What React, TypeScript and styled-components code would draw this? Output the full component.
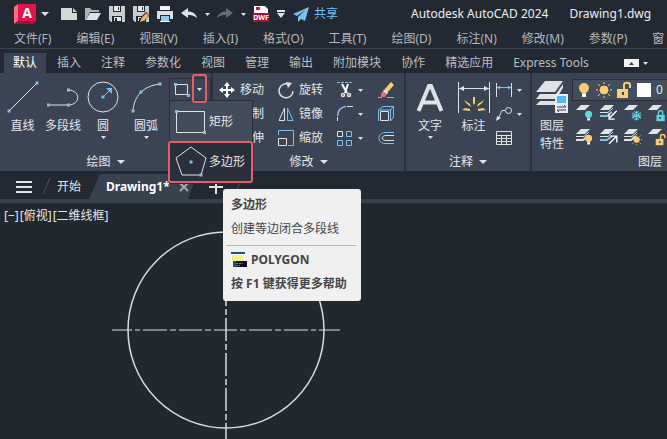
import React from "react";
import styled, { createGlobalStyle, css } from "styled-components";

const GlobalStyle = createGlobalStyle`
  * { box-sizing: border-box; }
  body {
    margin: 0;
    background: #212830;
    color: #e4e7ea;
    font: 12px/16px "Noto Sans", "Noto Sans CJK SC", sans-serif;
  }
  button, select { font: inherit; color: inherit; }
`;

const ink = "#dfe3e6";
const blue = "#7cc0f0";
const gold = "#f9cd74";

const buttonReset = css`
  margin: 0;
  padding: 0;
  border: 0;
  background: none;
  display: flex;
  align-items: center;
  flex: none;
  white-space: nowrap;
`;

const Window = styled.div`
  display: flex;
  flex-direction: column;
  min-height: 100vh;
  overflow: hidden;
`;

const TitleBar = styled.header`
  display: flex;
  align-items: center;
  height: 28px;
  padding-left: 14px;
  background: #222933;
`;

const QuickTools = styled.div`
  display: flex;
  align-items: center;
  gap: 8px;
  flex: none;
  width: 397px;
`;

const QuickButton = styled.button<{ $w?: number }>`
  ${buttonReset}
  justify-content: center;
  width: ${(p) => p.$w ?? 16}px;
  height: 20px;
`;

const LogoButton = styled.button`
  ${buttonReset}
  gap: 4px;
  width: 39px;
`;

const ShareButton = styled.button`
  ${buttonReset}
  gap: 5px;
  color: #76bdf0;
`;

const WindowTitle = styled.h1`
  display: flex;
  gap: 21px;
  margin: 0;
  flex: none;
  font-size: 12px;
  font-weight: 400;
  color: #eceef0;
`;

const MenuBar = styled.nav`
  display: flex;
  height: 21px;
  padding: 1px 0 0 14px;
  gap: 25px;
  border-bottom: 1px solid #3d4551;
  background: #222933;
`;

const MenuButton = styled.button`
  ${buttonReset}
  color: #b3b8be;
`;

const TabBar = styled.nav`
  display: flex;
  align-items: flex-end;
  height: 24px;
  padding-left: 4px;
  background: #222933;
`;

const RibbonTab = styled.button<{ $active?: boolean }>`
  ${buttonReset}
  height: 20px;
  padding: 0 10px;
  color: ${(p) => (p.$active ? "#ffffff" : "#b9bec4")};
  background: ${(p) => (p.$active ? "#3b4453" : "transparent")};
  &:first-child { padding: 0 9px; margin-right: 1px; }
`;

const TabTools = styled.div`
  display: flex;
  align-items: center;
  gap: 4px;
  height: 20px;
  margin-left: 25px;
`;

const CollapseButton = styled.button`
  ${buttonReset}
  justify-content: center;
  width: 15px;
  height: 8px;
  background: #f1f2f3;
`;

const Ribbon = styled.div`
  display: flex;
  height: 98px;
  margin-bottom: 3px;
  background: #3b4453;
`;

const Panel = styled.section<{ $w: number }>`
  display: flex;
  flex-direction: column;
  flex: none;
  width: ${(p) => p.$w}px;
  border-right: 2px solid #2c333e;
  &:last-child { border: 0; }
`;

const PanelBody = styled.div<{ $pad?: number }>`
  display: flex;
  flex: 1;
  min-height: 0;
  padding: 5px 0 0 ${(p) => p.$pad ?? 0}px;
`;

const PanelFooter = styled.button`
  ${buttonReset}
  justify-content: center;
  gap: 6px;
  width: 100%;
  height: 18px;
`;

const BigButton = styled.button<{ $w: number }>`
  ${buttonReset}
  flex-direction: column;
  width: ${(p) => p.$w}px;
  padding-top: 3px;
  justify-content: flex-start;
`;

const BigLabel = styled.span`
  display: block;
  margin: 4px 0 1px;
  line-height: 18px;
  text-align: center;
`;

const ToolColumn = styled.div<{ $w: number }>`
  display: flex;
  flex-direction: column;
  flex: none;
  width: ${(p) => p.$w}px;
`;

const ToolButton = styled.button`
  ${buttonReset}
  gap: 5px;
  height: 24px;
`;

const SplitTool = styled.div`
  position: relative;
  display: flex;
  align-self: flex-start;
  height: 23px;
  border: 1px solid #29303a;
  width: 42px;
`;

const SplitMain = styled.button`
  ${buttonReset}
  justify-content: center;
  width: 23px;
`;

const SplitArrow = styled.button`
  ${buttonReset}
  position: relative;
  justify-content: center;
  width: 13px;
  &::after {
    content: "";
    position: absolute;
    inset: -5px -1px -3px -1px;
    border: 2px solid #e85c68;
    border-radius: 3px;
    z-index: 4;
  }
`;

const ShapeMenu = styled.div`
  position: absolute;
  top: 21px;
  left: -1px;
  width: 84px;
  z-index: 3;
  background: #434c5b;
  border: 1px solid #29303a;
`;

const ShapeItem = styled.button<{ $active?: boolean }>`
  ${buttonReset}
  gap: 2px;
  width: 100%;
  height: 40px;
  padding: 2px 0 0 5px;
  ${(p) =>
    p.$active &&
    css`
      height: 42px;
      margin: 0 -2px;
      width: 85px;
      padding-top: 0;
      background: #29303b;
      border: 2px solid #e85c68;
      border-radius: 3px;
    `}
`;

const Tooltip = styled.div`
  position: absolute;
  top: 88px;
  left: 53px;
  width: 138px;
  height: 112px;
  padding: 8px 3px;
  border-radius: 3px;
  background: #f0f0f0;
  color: #454545;
`;

const TipText = styled.p<{ $light?: boolean }>`
  display: flex;
  align-items: center;
  gap: 4px;
  margin: 0;
  padding-left: 5px;
  height: 24px;
  white-space: nowrap;
  font-weight: ${(p) => (p.$light ? 400 : 700)};
  &:first-child { height: 16px; margin-bottom: 4px; }
`;

const TipRule = styled.hr`
  margin: 4px 0 2px;
  border: 0;
  border-top: 1px solid #b4b4b4;
  width: 130px;
`;

const LayerArea = styled.div`
  display: flex;
  flex-direction: column;
  padding-top: 1px;
`;

const LayerCombo = styled.div`
  display: flex;
  align-items: center;
  gap: 4px;
  height: 22px;
  width: 160px;
  padding-left: 3px;
  border: 1px solid #29303a;
  background: #434d5c;
`;

const LayerSelect = styled.select`
  appearance: none;
  border: 0;
  padding: 0;
  background: transparent;
`;

const LayerGrid = styled.div`
  display: grid;
  grid-template-columns: repeat(4, 24px);
  padding-left: 4px;
`;

const DocBar = styled.nav`
  display: flex;
  height: 29px;
  border-bottom: 4px solid #38414e;
  background: #222933;
`;

const DocButton = styled.button<{ $w: number }>`
  ${buttonReset}
  justify-content: center;
  width: ${(p) => p.$w}px;
`;

const ActiveDoc = styled.div`
  display: flex;
  align-items: center;
  gap: 8px;
  width: 108px;
  padding-left: 17px;
  background: #38414e;
  clip-path: polygon(11px 0, 100% 0, calc(100% - 9px) 100%, 0 100%);
`;

const DocName = styled.button`
  ${buttonReset}
  font-weight: 700;
  color: #ffffff;
`;

const Canvas = styled.main`
  position: relative;
  flex: 1;
  min-height: 236px;
  overflow: hidden;
  background: #212830;
`;

const ViewControls = styled.div`
  display: flex;
  gap: 1px;
  padding: 5px 0 0 4px;
`;

const ViewButton = styled.button`
  ${buttonReset}
`;

const Drawing = styled.svg`
  position: absolute;
  left: 110px;
  top: 0;
`;

const Icon = styled.svg`
  display: block;
  flex: none;
  overflow: visible;
  fill: none;
`;

type IconProps = { w?: number; h?: number; children: React.ReactNode };
const I = ({ w = 16, h = 16, children }: IconProps) => (
  <Icon width={w} height={h} viewBox={`0 0 ${w} ${h}`} stroke={ink} aria-hidden="true">
    {children}
  </Icon>
);

const Arrow = ({ big }: { big?: boolean }) => {
  const w = big ? 8 : 5;
  const h = big ? 4 : 3;
  return (
    <I w={w} h={h}>
      <path d={`M0 0H${w}L${w / 2} ${h}Z`} fill={ink} stroke="none" />
    </I>
  );
};

const Node = ({ x, y }: { x: number; y: number }) => (
  <rect x={x - 1.5} y={y - 1.5} width="3" height="3" fill={blue} stroke="none" />
);

const Logo = () => (
  <I w={23} h={20}>
    <g stroke="none">
      <path d="M0 3L4 0V17L0 20Z" fill="#ff6b83" />
      <path d="M4 0H22V17H4Z" fill="#e0144d" />
      <path d="M0 20L4 17H22L20 20Z" fill="#a90e3b" />
      <text x="13" y="14" textAnchor="middle" fontSize="14" fontWeight="700" fill="#fff">A</text>
    </g>
  </I>
);

const floppy = (
  <g stroke="none">
    <path d="M0 0H16V16H2L0 14Z" fill="#c9cdd0" />
    <path d="M4 0H12V6H4ZM3 10H13V16H3Z" fill="#222933" />
    <path d="M5 0H11V5H5ZM5 11H12V15H5Z" fill="#e9ebec" />
    <path d="M9 1H10V4H9ZM6 12H8V15H6Z" fill="#222933" />
  </g>
);

const undo = "M0 7L7 2V5.500C12 5.500 15 8 16 12C13 9.500 10 9 7 9V12Z";

const QuickAccess = () => (
  <>
    <QuickButton aria-label="新建">
      <I><path d="M0 2H11V7H16V14H0Z" fill="#d5d8da" stroke="none" /><path d="M12 2L16 6H12Z" fill="#d5d8da" stroke="none" /></I>
    </QuickButton>
    <QuickButton aria-label="打开">
      <I><path d="M0 14V2H5L7 4H14V6H5L1 14Z" fill="#aeb3b7" stroke="none" /><path d="M5 7H16L12 14H1Z" fill="#dfe2e4" stroke="none" /></I>
    </QuickButton>
    <QuickButton aria-label="保存"><I>{floppy}</I></QuickButton>
    <QuickButton aria-label="另存为">
      <I>
        {floppy}
        <path d="M6 17L8 11L13 6L17 9L11 15Z" fill="#222933" stroke="none" />
        <path d="M7 16L8.500 12L13 7.500L15.500 10L11 14.500Z" fill="#f5bd57" stroke="none" />
        <path d="M13 7.500L14.500 6.500L16.500 8.500L15.500 10Z" fill="#ed6574" stroke="none" />
      </I>
    </QuickButton>
    <QuickButton aria-label="打印">
      <I>
        <g stroke="none">
          <path d="M3 0H13V4H3Z" fill="#f1f2f3" />
          <path d="M0 5H16V13H13V9H3V13H0Z" fill="#dcdfe1" />
          <path d="M4 10H12V16H4Z" fill="#8bcbf5" />
          <path d="M3 15H13V16H3Z" fill="#fff" />
        </g>
      </I>
    </QuickButton>
    <QuickButton aria-label="放弃"><I><path d={undo} fill={ink} stroke="none" /></I></QuickButton>
    <QuickButton $w={4} aria-label="放弃列表"><Arrow /></QuickButton>
    <QuickButton aria-label="重做">
      <I><path d={undo} transform="matrix(-1 0 0 1 16 0)" fill="#646b74" stroke="none" /></I>
    </QuickButton>
    <QuickButton $w={4} aria-label="重做列表"><Arrow /></QuickButton>
    <QuickButton aria-label="DWF">
      <I>
        <g stroke="none">
          <path d="M1 0H12L15 3V9H1Z" fill="#fff" />
          <path d="M3 1H7V4H3Z" fill="#c71b45" />
          <path d="M0 7H16V16H0Z" fill="#a60f36" />
          <text x="8" y="14" textAnchor="middle" fontSize="7" fontWeight="700" fill="#fff">DWF</text>
        </g>
      </I>
    </QuickButton>
    <QuickButton $w={8} aria-label="自定义">
      <I w={8} h={8}><path d="M0 0H8V2H0ZM0 3H8L4 8Z" fill={ink} stroke="none" /></I>
    </QuickButton>
    <ShareButton>
      <I><path d="M16 1L0 8L4 10L12 4L5 11V16L8 13L12 15Z" fill={blue} stroke="none" /></I>
      共享
    </ShareButton>
  </>
);

const icons: Record<string, React.ReactNode> = {
  line: <I w={32} h={32}><path d="M2 30L30 2" /><Node x={2} y={30} /><Node x={30} y={2} /></I>,
  polyline: <I w={32} h={32}><path d="M1 24H21C34 24 34 9 21 9" /><Node x={1.5} y={24} /><Node x={21.5} y={24} /><Node x={21.5} y={9} /></I>,
  circle: <I w={32} h={32}><circle cx="16" cy="16" r="15" /><path d="M16 16L24 8" stroke={blue} /><path d="M19 7H25V13Z" fill={blue} stroke="none" /><Node x={16} y={16} /></I>,
  arc: <I w={32} h={32}><path d="M3 30C4 15 13 5 30 3" /><Node x={3} y={30} /><Node x={11} y={11} /><Node x={30} y={3} /></I>,
  move: <I><path d="M8 2V14M2 8H14" strokeWidth="2" stroke="#fff" /><path d="M8 0L11 4H5ZM8 16L5 12H11ZM0 8L4 5V11ZM16 8L12 11V5Z" fill="#fff" stroke="none" /></I>,
  copy: <I><circle cx="5" cy="5" r="4" /><circle cx="11" cy="11" r="4" stroke={blue} /></I>,
  stretch: <I><path d="M2 2H14V14H2Z" /></I>,
  rotate: <I><path d="M11 2.500A7 7 0 1 0 15 9" strokeWidth="1.500" /><path d="M8 0L14 1L10 6Z" fill={ink} stroke="none" /></I>,
  mirror: <I><path d="M6.500 2V14.500H1Z" /><path d="M9.500 2V14.500H15Z" stroke={blue} /></I>,
  scale: <I><path d="M.5 5V.5H15.500V15.500H10" stroke={blue} /><path d="M.5 8.500H8.500V15.500H.5Z" /></I>,
  trim: <I><path d="M0 .5H16" strokeDasharray="3 1" stroke={blue} /><path d="M5 2L10 11M11 2L8 11" strokeWidth="2" stroke="#fff" /><circle cx="6" cy="13" r="1.500" strokeWidth="1.500" /><circle cx="12" cy="13" r="1.500" strokeWidth="1.500" /></I>,
  fillet: <I><path d="M.5 15V11M10 .5H16" /><path d="M.5 10C1 4 4 1 9 .5" stroke={blue} strokeWidth="1.500" /></I>,
  array: <I><path d="M.5 1.500H5.500V6.500H.5Z" /><path d="M9.500 1.500H14.500V6.500H9.500ZM.5 10.500H5.500V15.500H.5ZM9.500 10.500H14.500V15.500H9.500Z" stroke={blue} /></I>,
  erase: <I><path d="M0 15.500H4M9 15.500H16" stroke={blue} /><path d="M6 8L13 0L16 3L9 11Z" fill={gold} stroke="none" /><path d="M5 9L9 12L7 15H3V12Z" fill="#ed6b73" stroke="none" /><path d="M6 8L10 11L9 12L5 9Z" fill="#fff" stroke="none" /></I>,
  explode: <I><path d="M2.500 5.500H10.500V14.500H2.500Z" /><path d="M.5 4L5 .5H15.500L12.500 4H.5V15M12.500 4V15L15.500 11V.5" stroke={blue} /></I>,
  offset: <I><path d="M16 2.500H7C-1 2.500-1 13.500 7 13.500H16" stroke={blue} /><path d="M16 5.500H8C3 5.500 3 10.500 8 10.500H16" /></I>,
  text: <I w={32} h={32}><path d="M4.500 30L15 5H17L27.500 30M9 21.500H23" strokeWidth="4" /></I>,
  dimension: (
    <I w={32} h={32}>
      <path d="M.5 1V32M31.500 1V32M1 7.500H31" />
      <path d="M1 7.500L6 5V10ZM31 7.500L26 5V10Z" fill={ink} stroke="none" />
      <g fill={gold} stroke="none">
        <path d="M15 16H17V22L16 24L15 22ZM6 19L12 23L13 26L8 22ZM26 19L20 23L19 26L24 22ZM4 29L7 27L12 28V30ZM28 29L25 27L20 28V30Z" />
      </g>
    </I>
  ),
  linear: <I><path d="M.5 1V15M15.500 1V15" /><path d="M1 5.500H15" stroke={blue} /><path d="M1 5.500L4 3.500V7.500ZM15 5.500L12 3.500V7.500Z" fill={blue} stroke="none" /></I>,
  leader: <I><circle cx="12.500" cy="4.500" r="3" /><path d="M9 4.500H6L2 13" /><path d="M0 15L1 10L5 12Z" fill={ink} stroke="none" /></I>,
  table: <I><path d="M.5 1.500H15.500V14.500H.5ZM1 5.500H15M1 8.500H15M1 11.500H15M5.500 5V14M10.500 5V14" /></I>,
  rect: <I><path d="M1.500 2.500H13.500V12.500H1.500Z" /><Node x={1.5} y={2.5} /><Node x={14.5} y={13.5} /></I>,
  bigRect: <I w={32} h={32}><path d="M1.500 5.500H29.500V26.500H1.500Z" /><Node x={1.5} y={5.5} /><Node x={29.5} y={26.5} /></I>,
  polygon: <I w={32} h={32}><path d="M16 1L31 12L26 29H7L1 12Z" /><Node x={16} y={16} /><Node x={26} y={29} /></I>,
  layers: (
    <I w={32} h={32}>
      <g stroke="none" fill={ink}>
        <path d="M9 0H27L19 11H0ZM4 13H20L27 3L27 7L20 18H0ZM4 20H19V24H0Z" />
        <path d="M19 13H32V32H19Z" fill="#e9ebed" />
        <path d="M21 15H30V22H21Z" fill="#58b4f5" />
      </g>
      <path d="M21 26H30L28 24M30 29H21L23 31" stroke="#38414e" />
    </I>
  ),
};

const Bulb = ({ color = gold }: { color?: string }) => (
  <g stroke="none"><circle cx="8" cy="6" r="5" fill={color} /><path d="M5 8H11L10 12H6Z" fill={color} /><path d="M6 12H10V15H6Z" fill="#fff" /></g>
);
const Sun = () => (
  <g stroke={gold}><circle cx="8" cy="8" r="4" fill={gold} /><path d="M8 0V2M8 14V16M0 8H2M14 8H16M2 2L4 4M12 12L14 14M14 2L12 4M4 12L2 14" /></g>
);
const Lock = ({ color = gold, open }: { color?: string; open?: boolean }) => (
  <g stroke={color}>
    <path d={open ? "M8 8V3C8 0 14 0 14 3V6" : "M5 8V4C5 0 11 0 11 4V8"} strokeWidth="2" />
    <path d={open ? "M1 7H12V16H1Z" : "M2 7H14V16H2Z"} fill={color} stroke="none" />
    <path d="M7 10V13" stroke="#3b4453" strokeWidth="2" />
  </g>
);

type Badge = "bulb" | "lock" | "snow" | "in" | "out" | "sun" | "open" | "bulbOn";
const badges: Record<Badge, React.ReactNode> = {
  bulb: <Bulb color="#65d8e8" />,
  bulbOn: <Bulb />,
  lock: <Lock color="#62d0df" />,
  open: <Lock open />,
  sun: <Sun />,
  snow: <path d="M8 1V15M2 4L14 12M14 4L2 12M5 2L8 5L11 2M5 14L8 11L11 14M1 7L5 8L2 11M15 7L11 8L14 11" stroke="#62d0df" strokeWidth="1.500" />,
  in: <path d="M14 1L4 11M3 5V13H11" stroke="#fff" strokeWidth="2" />,
  out: <path d="M3 14L13 4M5 3H14V12" stroke="#fff" strokeWidth="2" />,
};

const LayerIcon = ({ badge, stack }: { badge: Badge; stack?: boolean }) => (
  <I>
    <path d="M5 0H14L9 5H0Z" fill={ink} stroke="none" />
    {stack && (
      <>
        <path d="M0 7.500H8L13 3" />
        <path d="M0 11H7L12 7" stroke={badge === "in" || badge === "out" ? blue : ink} strokeWidth="2" />
      </>
    )}
    <g transform="translate(7 5) scale(.7)">{badges[badge]}</g>
  </I>
);

const layerTools: [string, Badge, boolean][] = [
  ["关", "bulb", false], ["匹配", "in", true], ["冻结", "snow", false], ["锁定", "lock", false],
  ["全部打开", "bulbOn", true], ["置为当前", "out", true], ["解冻", "sun", true], ["解锁", "open", false],
];

type BigProps = { icon: string; label: string; w: number; arrow?: boolean; second?: string };
const Big = ({ icon, label, w, arrow, second }: BigProps) => (
  <BigButton $w={w}>
    {icons[icon]}
    <BigLabel>{label}{second && <><br />{second}</>}</BigLabel>
    {arrow && <Arrow />}
  </BigButton>
);

const Tool = ({ icon, label, name, arrow }: { icon: string; label?: string; name?: string; arrow?: boolean }) => (
  <ToolButton aria-label={name}>
    {icons[icon]}
    {label}
    {arrow && <Arrow />}
  </ToolButton>
);

const menus = ["文件(F)", "编辑(E)", "视图(V)", "插入(I)", "格式(O)", "工具(T)", "绘图(D)", "标注(N)", "修改(M)", "参数(P)", "窗"];
const tabs = ["默认", "插入", "注释", "参数化", "视图", "管理", "输出", "附加模块", "协作", "精选应用", "Express Tools"];

export default function App() {
  return (
    <Window>
      <GlobalStyle />
      <TitleBar>
        <QuickTools>
          <LogoButton aria-label="应用程序菜单"><Logo /><Arrow big /></LogoButton>
          <QuickAccess />
        </QuickTools>
        <WindowTitle><span>Autodesk AutoCAD 2024</span><span>Drawing1.dwg</span></WindowTitle>
      </TitleBar>
      <MenuBar>{menus.map((m) => <MenuButton key={m}>{m}</MenuButton>)}</MenuBar>
      <TabBar>
        {tabs.map((t, i) => <RibbonTab key={t} $active={i === 0}>{t}</RibbonTab>)}
        <TabTools>
          <CollapseButton aria-label="最小化功能区">
            <I w={5} h={3}><path d="M0 3H5L2.500 0Z" fill="#444" stroke="none" /></I>
          </CollapseButton>
          <Arrow />
        </TabTools>
      </TabBar>
      <Ribbon>
        <Panel $w={213}>
          <PanelBody $pad={2}>
            <Big icon="line" label="直线" w={41} />
            <Big icon="polyline" label="多段线" w={40} />
            <Big icon="circle" label="圆" w={40} arrow />
            <Big icon="arc" label="圆弧" w={46} arrow />
            <SplitTool>
              <SplitMain aria-label="矩形工具">{icons.rect}</SplitMain>
              <SplitArrow aria-label="形状列表"><Arrow /></SplitArrow>
              <ShapeMenu>
                <ShapeItem>{icons.bigRect}矩形</ShapeItem>
                <ShapeItem $active>{icons.polygon}多边形</ShapeItem>
                <Tooltip role="tooltip">
                  <TipText>多边形</TipText>
                  <TipText $light>创建等边闭合多段线</TipText>
                  <TipRule />
                  <TipText>
                    <I>
                      <g stroke="none">
                        <path d="M0 1H14V14H0Z" fill="#fff" />
                        <path d="M1 3H13V11H1Z" fill="#f5f08a" />
                        <path d="M0 0H14V2H0Z" fill="#2848a0" />
                        <path d="M2 9H16V15H2Z" fill="#10131c" />
                        <path d="M2 9H5V15H2Z" fill="#2848a0" />
                      </g>
                      <path d="M5 11.500H12M5 13.500H9" stroke="#7d818a" strokeDasharray="2 1" />
                    </I>
                    POLYGON
                  </TipText>
                  <TipText>按 F1 键获得更多帮助</TipText>
                </Tooltip>
              </ShapeMenu>
            </SplitTool>
          </PanelBody>
          <PanelFooter>绘图<Arrow big /></PanelFooter>
        </Panel>
        <Panel $w={193}>
          <PanelBody $pad={6}>
            <ToolColumn $w={59}>
              <Tool icon="move" label="移动" />
              <Tool icon="copy" label="复制" />
              <Tool icon="stretch" label="拉伸" />
            </ToolColumn>
            <ToolColumn $w={59}>
              <Tool icon="rotate" label="旋转" />
              <Tool icon="mirror" label="镜像" />
              <Tool icon="scale" label="缩放" />
            </ToolColumn>
            <ToolColumn $w={41}>
              <Tool icon="trim" name="修剪" arrow />
              <Tool icon="fillet" name="圆角" arrow />
              <Tool icon="array" name="阵列" arrow />
            </ToolColumn>
            <ToolColumn $w={20}>
              <Tool icon="erase" name="删除" />
              <Tool icon="explode" name="分解" />
              <Tool icon="offset" name="偏移" />
            </ToolColumn>
          </PanelBody>
          <PanelFooter>修改<Arrow big /></PanelFooter>
        </Panel>
        <Panel $w={126}>
          <PanelBody $pad={3}>
            <Big icon="text" label="文字" w={42} arrow />
            <Big icon="dimension" label="标注" w={45} />
            <ToolColumn $w={32}>
              <Tool icon="linear" name="线性" arrow />
              <Tool icon="leader" name="引线" arrow />
              <Tool icon="table" name="表格" />
            </ToolColumn>
          </PanelBody>
          <PanelFooter>注释<Arrow big /></PanelFooter>
        </Panel>
        <Panel $w={250}>
          <PanelBody>
            <Big icon="layers" label="图层" second="特性" w={40} />
            <LayerArea>
              <LayerCombo>
                <I><Bulb /></I><I><Sun /></I><I><Lock open /></I>
                <I><path d="M1 1H15V15H1Z" fill="#fff" stroke="none" /></I>
                <LayerSelect aria-label="图层"><option>0</option></LayerSelect>
              </LayerCombo>
              <LayerGrid>
                {layerTools.map(([name, badge, stack]) => (
                  <ToolButton key={name} aria-label={name}><LayerIcon badge={badge} stack={stack} /></ToolButton>
                ))}
              </LayerGrid>
            </LayerArea>
          </PanelBody>
          <PanelFooter>图层<Arrow big /></PanelFooter>
        </Panel>
      </Ribbon>
      <DocBar>
        <DocButton $w={48} aria-label="菜单"><I><path d="M0 3H16M0 8H16M0 13H16" strokeWidth="2" /></I></DocButton>
        <I w={1} h={25}><path d="M-5 20L2 4" stroke="#4a525d" /></I>
        <DocButton $w={40}>开始</DocButton>
        <ActiveDoc>
          <DocName>Drawing1*</DocName>
          <DocButton $w={12} aria-label="关闭"><I w={8} h={8}><path d="M0 0L8 8M8 0L0 8" stroke="#a5abb2" strokeWidth="2" /></I></DocButton>
        </ActiveDoc>
        <DocButton $w={38} aria-label="新图形"><I w={14} h={14}><path d="M7 0V14M0 7H14" strokeWidth="2" /></I></DocButton>
        <I w={8} h={25}><path d="M0 20L7 4" stroke="#4a525d" /></I>
      </DocBar>
      <Canvas>
        <ViewControls>
          <ViewButton>[−]</ViewButton><ViewButton>[俯视]</ViewButton><ViewButton>[二维线框]</ViewButton>
        </ViewControls>
        <Drawing width="232" height="236" viewBox="0 0 232 236" fill="none" stroke="#d9dcdf" aria-label="圆">
          <circle cx="116" cy="127" r="98" strokeWidth="1.500" />
          <path d="M2 127H230" strokeDasharray="20 3 5 3 24 3 6 3 23 3 6 3 23 3 6 3 23 3 6 3 24 3 5 3 21" />
          <path d="M116 10V236" strokeDasharray="23 3 6 3" strokeWidth="1.500" />
        </Drawing>
      </Canvas>
    </Window>
  );
}
